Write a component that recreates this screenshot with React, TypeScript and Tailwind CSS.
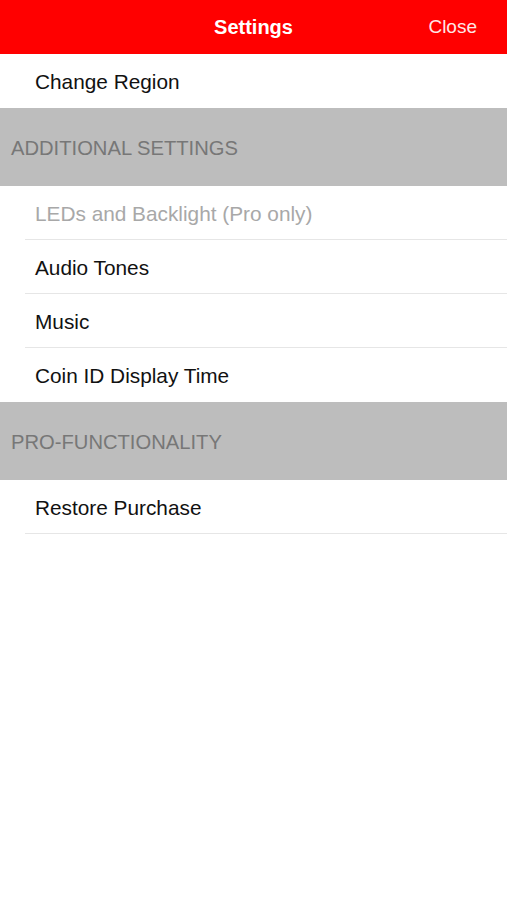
const sections: { title?: string; rows: { label: string; muted?: boolean }[] }[] = [
  { rows: [{ label: "Change Region" }] },
  {
    title: "ADDITIONAL SETTINGS",
    rows: [
      { label: "LEDs and Backlight (Pro only)", muted: true },
      { label: "Audio Tones" },
      { label: "Music" },
      { label: "Coin ID Display Time" },
    ],
  },
  { title: "PRO-FUNCTIONALITY", rows: [{ label: "Restore Purchase" }] },
];

function Row({ label, muted, last }: { label: string; muted?: boolean; last: boolean }) {
  return (
    <div className="pl-[25px]">
      <div
        className={`flex h-[54px] items-center pl-[10px] pt-[2px] text-[20.8px] ${
          muted ? "text-[#a8a8a8]" : "text-[#111]"
        } ${last ? "" : "border-b border-[#e6e6e6]"}`}
      >
        {label}
      </div>
    </div>
  );
}

export default function App() {
  return (
    <div
      className="flex min-h-[900px] w-full flex-col bg-white"
      style={{ fontFamily: '"Liberation Sans", Arial, sans-serif' }}
    >
      {/* Nav bar */}
      <div className="relative flex h-[54px] items-center justify-center bg-[#ff0000]">
        <span className="text-[20px] font-bold text-white">Settings</span>
        <span className="absolute right-[30px] text-[19px] text-[#ffe6e6]">Close</span>
      </div>

      {sections.map((s, i) => (
        <div key={i}>
          {s.title && (
            <div className="flex h-[78px] items-center bg-[#bdbdbd] pl-[11px] pt-[2px] text-[20.2px] text-[#777]">
              {s.title}
            </div>
          )}
          {s.rows.map((r, j) => (
            <Row
              key={r.label}
              label={r.label}
              muted={r.muted}
              last={j === s.rows.length - 1 && i < sections.length - 1}
            />
          ))}
        </div>
      ))}
    </div>
  );
}
